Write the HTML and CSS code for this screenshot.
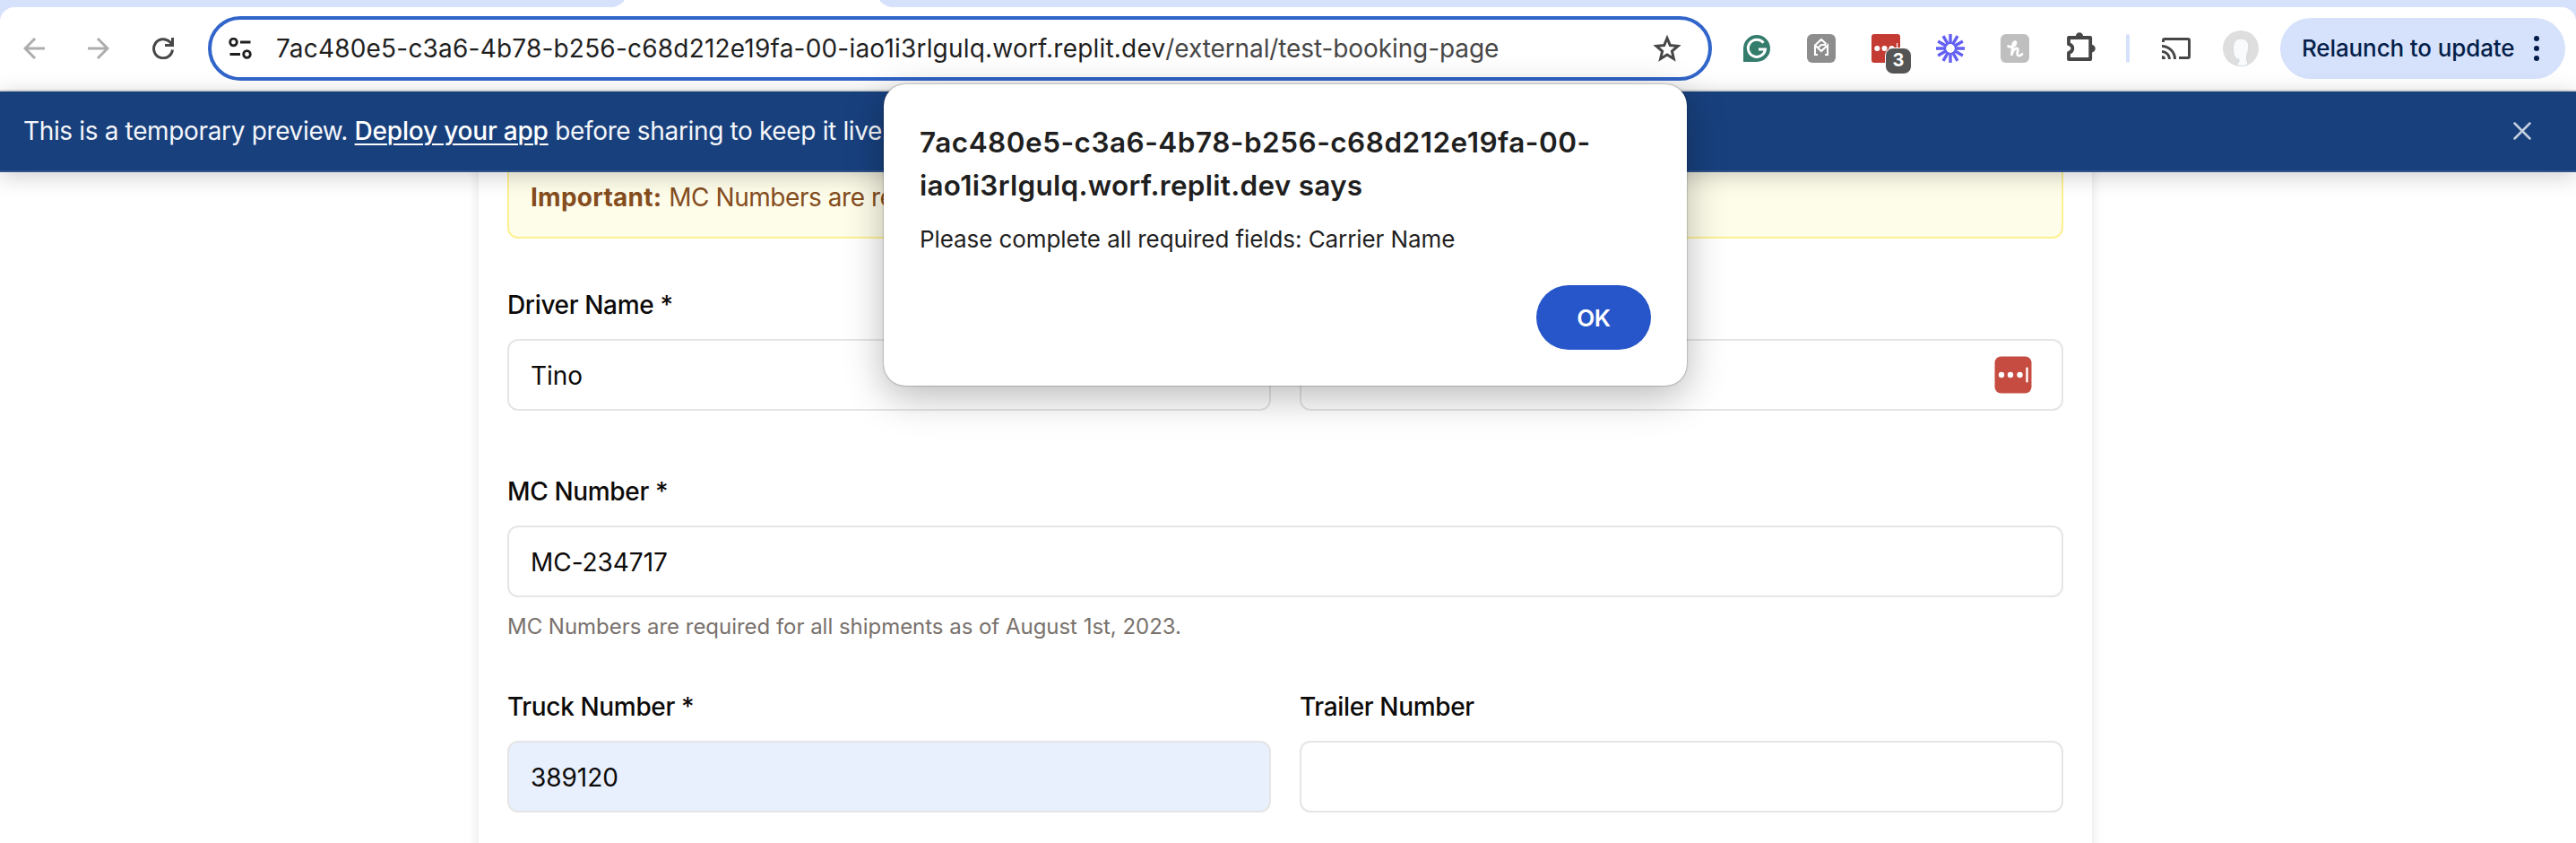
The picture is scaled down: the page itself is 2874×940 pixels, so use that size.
FILE: index.html
```html
<!DOCTYPE html>
<html lang="en">
<head>
<meta charset="utf-8">
<title>Booking</title>
<link rel="stylesheet" href="styles.css">
</head>
<body>
<div class="tabs"><div class="tabs-left"></div><div class="tabs-right"></div></div>
<header class="toolbar-wrap">
  <div class="toolbar">
    <div class="nav">
      <svg class="dim" width="24" height="24" viewBox="0 0 24 24"><path d="M24 12H2M13 1L2 12l11 11"/></svg>
      <svg class="dim" width="24" height="24" viewBox="0 0 24 24"><path d="M0 12H22M11 1l11 11-11 11"/></svg>
      <svg class="dark" width="24" height="24" viewBox="0 0 24 24"><path d="M22.500 13.500A10.500 10.500 0 1 1 19.500 4.800L22 7.500M22.500 0v8.500h-8.500"/></svg>
    </div>
    <div class="omnibox">
      <svg class="tune" width="26" height="24" viewBox="0 0 26 24"><circle cx="5.500" cy="5" r="3.800"/><circle cx="20.500" cy="18.500" r="3.800"/><path d="M13 5h11.500M1.500 18.500h11.500"/></svg>
      <span class="url">7ac480e5-c3a6-4b78-b256-c68d212e19fa-00-iao1i3rlgulq.worf.replit.dev<span class="path">/external/test-booking-page</span></span>
      <svg class="star" width="32" height="30" viewBox="0 0 32 30"><path d="M16 3.500l3.300 8 8.700.8-6.600 5.700 2 8.500-7.400-4.500-7.400 4.500 2-8.500L4 12.300l8.700-.8z"/></svg>
    </div>
    <div class="exts">
      <svg width="32" height="32" viewBox="0 0 32 32"><path d="M1 31V16a15 15 0 1 1 15 15z" fill="#347c6c"/><path d="M23.500 9.800A9.600 9.600 0 1 0 25.500 17H18" fill="none" stroke="#fff" stroke-width="3"/></svg>
      <svg width="32" height="32" viewBox="0 0 32 32"><rect width="32" height="32" rx="6" fill="#8d8d8d"/><path d="M12 23H9V12.500L16 6l5.500 5M9 12.500l7 6.500 7-6.500V23h-3M21 12h-5l-3.500 3" fill="none" stroke="#fff" stroke-width="2.100"/></svg>
      <div class="pass">
        <svg width="32" height="32" viewBox="0 0 32 32"><rect width="32" height="32" rx="3" fill="#c33b32"/><g fill="#fff"><circle cx="6.300" cy="16" r="3"/><circle cx="14.500" cy="16" r="3"/><circle cx="22.500" cy="16" r="3"/><rect x="28" y="10" width="1.200" height="12"/></g></svg>
        <span class="count">3</span>
      </div>
      <svg width="32" height="32" viewBox="-16 -16 32 32"><g stroke="#6460f2" stroke-width="3.400"><path id="r" d="M0-16V-5M0 16V5M-16 0H-5M16 0H5"/><use href="#r" transform="rotate(30)"/><use href="#r" transform="rotate(60)"/><circle r="6" fill="none" stroke-width="2.200"/></g></svg>
      <svg width="32" height="32" viewBox="0 0 32 32"><rect width="32" height="32" rx="6" fill="#bfbfbf"/><path d="M8.500 13.500c3 1.500 8 .5 8.500-3.500.2-2.500-2.500-2-3.200 1L12.200 24c1-5 3.500-8.500 6-8.200 2.500.5 0 4.500.5 7 .5 2.200 3.500 1.500 5.300-.5" fill="none" stroke="#fff" stroke-width="2.700" stroke-linecap="round"/></svg>
      <svg class="puzzle" width="34" height="34" viewBox="0 0 34 34"><path fill="none" stroke="#464646" stroke-width="3.800" stroke-linejoin="round" d="M3 6h24.200v24H3v-7.200c5.800-1.500 5.800-8.100 0-9.600z"/><path fill="#464746" d="M10.800 5a4.200 4.800 0 0 1 8.400 0zM28 13.800a4.800 4.300 0 0 1 0 8.600z"/></svg>
    </div>
    <i class="sep"></i>
    <svg class="cast" width="32" height="24" viewBox="0 0 32 24"><path fill="none" stroke="#474747" stroke-width="3" d="M1.500 5V3q0-1.500 1.500-1.500h26q1.500 0 1.500 1.500v18q0 1.500-1.500 1.500H19M0 9.500A14.500 14.500 0 0 1 14.500 24M0 15.500A8.500 8.500 0 0 1 8.500 24"/><path fill="#474747" d="M0 20a4 4 0 0 1 4 4H0z"/></svg>
    <svg class="avatar" width="40" height="40" viewBox="0 0 40 40"><circle cx="20" cy="20" r="20" fill="#dedede"/><path d="M20 9c5.500 0 8.700 3.500 8.700 9 0 6-2.700 8.500-2.200 14l1.500 6.500q-7 2.500-14-.2c3-1 4.500-2.800 4-6.300-4.500-.5-6.500-4-6.500-12S15 9 20 9z" fill="#f8fafb" stroke="#ccd3d8" stroke-width=".7"/></svg>
    <div class="relaunch"><span>Relaunch to update</span><svg width="6" height="28" viewBox="0 0 6 28"><circle cx="3" cy="3" r="3"/><circle cx="3" cy="14" r="3"/><circle cx="3" cy="25" r="3"/></svg></div>
  </div>
</header>
<div class="banner">
  <p>This is a temporary preview. <a>Deploy your app</a> before sharing to keep it live.</p>
  <svg width="20" height="20" viewBox="0 0 20 20"><path d="M1.500 1.500l17 17M18.500 1.500l-17 17"/></svg>
</div>
<main class="card">
  <div class="alert"><b>Important:</b> <span>MC Numbers are re</span></div>
  <div class="row">
    <div class="field"><label>Driver Name *</label><div class="input">Tino</div></div>
    <div class="field"><label>&nbsp;</label><div class="input end"><svg width="42" height="42" viewBox="0 0 42 42"><rect x=".5" y=".5" width="41" height="41" rx="7" fill="#c64b40"/><g fill="#fff"><circle cx="8" cy="21" r="3.200"/><circle cx="18" cy="21" r="3.200"/><circle cx="28.500" cy="21" r="3.200"/><rect x="35.300" y="12.500" width="2.400" height="17" rx="1"/></g></svg></div></div>
  </div>
  <div class="field mc"><label>MC Number *</label><div class="input">MC-234717</div><p class="hint">MC Numbers are required for all shipments as of August 1st, 2023.</p></div>
  <div class="row">
    <div class="field"><label>Truck Number *</label><div class="input filled">389120</div></div>
    <div class="field"><label>Trailer Number</label><div class="input"></div></div>
  </div>
</main>
<div class="dialog">
  <h1><span class="host">7ac480e5-c3a6-4b78-b256-c68d212e19fa-00-</span><br>iao1i3rlgulq.worf.replit.dev says</h1>
  <p>Please complete all required fields: Carrier Name</p>
  <button>OK</button>
</div>
</body>
</html>
```
FILE: styles.css
```css
* { box-sizing: border-box; }
body { margin: 0; width: 2874px; height: 940px; overflow: hidden; background: #fff; font: 28px/28px Inter, "Liberation Sans", sans-serif; color: #0c0a09; position: relative; }
p, h1 { margin: 0; }
svg { flex: none; display: block; }
.tabs { height: 8px; display: flex; justify-content: space-between; overflow: hidden; }
.tabs div { background: #d6e1fb; height: 28px; margin-top: -20px; }
.tabs-left { width: 701px; border-bottom-right-radius: 20px; }
.tabs-right { width: 1897px; border-bottom-left-radius: 20px; }
.toolbar-wrap { background: #d6e1fb; height: 94px; }
.toolbar { height: 94px; background: #fff; border-radius: 16px 16px 0 0; border-bottom: 2px solid #dfe1e1; display: flex; align-items: center; padding-left: 26px; }
.nav { display: flex; width: 206px; gap: 48px; }
.nav svg { fill: none; stroke-width: 3; }
.dim { stroke: #adadad; }
.nav .dark { stroke: #474747; }
.omnibox { width: 1678px; height: 72px; border: 4px solid #3165ca; border-radius: 36px; display: flex; align-items: center; padding: 0 30px 0 19px; }
.tune { fill: none; stroke: #1f1f1f; stroke-width: 2.8; }
.url { margin-left: 27px; color: #1f1f1f; white-space: nowrap; flex: 1; letter-spacing: .2px; }
.path { color: #474747; letter-spacing: -.1px; }
.star { fill: none; stroke: #474747; stroke-width: 3; }
.exts { display: flex; margin-left: 34px; gap: 40px; }
.pass { position: relative; }
.count { position: absolute; left: 15px; top: 15px; width: 30px; height: 30px; border: 1px solid #fff; border-radius: 9px; background: #555; color: #fff; font-size: 20px; font-weight: 700; line-height: 27px; text-align: center; }
.puzzle { margin: -2px 0 0 1px; }
.sep { width: 4px; height: 32px; border-radius: 2px; background: #d6e1fb; margin-left: 33px; }
.cast { margin-left: 36px; }
.avatar { margin-left: 36px; }
.relaunch { margin-left: 24px; width: 318px; height: 68px; border-radius: 34px; background: #d6e1fb; display: flex; align-items: center; justify-content: space-between; padding: 0 29px 0 24px; color: #041e49; font-size: 26px; font-weight: 500; letter-spacing: -.12px; white-space: nowrap; }
.relaunch svg { fill: #041e49; }
.banner { position: relative; z-index: 1; height: 90px; background: #18407d; border-bottom: 2px solid #2e5189; box-shadow: 0 4px 24px rgba(0,0,0,.2); color: #f4f6fa; display: flex; align-items: center; justify-content: space-between; padding: 0 50px 0 26px; letter-spacing: -.35px; }
.banner a { font-weight: 500; color: #fff; letter-spacing: -.2px; text-decoration: underline; text-decoration-thickness: 2px; text-underline-offset: 4px; }
.banner svg { stroke: #c5cfdf; stroke-width: 2.5; stroke-linecap: round; }
.card { width: 1800px; height: 800px; margin-left: 534px; margin-top: -20px; padding: 0 32px; box-shadow: 0 0 12px rgba(0,0,0,.12); }
.alert { height: 94px; border: 2px solid #fdf08f; border-radius: 12px; background: #fefdea; color: #854d1e; line-height: 40px; padding: 26px 24px; white-space: nowrap; }
.alert b { letter-spacing: .25px; }
.alert span { letter-spacing: -.45px; }
.row { display: grid; grid-template-columns: 1fr 1fr; gap: 32px; margin-top: 60px; }
.field label { display: block; height: 28px; font-weight: 500; letter-spacing: -.35px; }
.input { height: 80px; margin-top: 24px; border: 2px solid #e5e5e5; border-radius: 12px; padding: 2px 24px 0; display: flex; align-items: center; letter-spacing: -.05px; }
.end { justify-content: flex-end; padding: 0 33px; }
.filled { background: #e8f0fe; }
.mc { margin-top: 76px; }
.hint { margin: 15px 0 -1px; font-size: 24px; line-height: 36px; letter-spacing: -.03px; color: #78716c; white-space: nowrap; }
.mc + .row { margin-top: 58px; }
.dialog { position: absolute; z-index: 2; left: 986px; top: 94px; width: 896px; height: 336px; border-radius: 24px; background: #fff; box-shadow: 0 0 2px rgba(0,0,0,.55), 0 12px 44px rgba(0,0,0,.28); padding: 41px 40px; color: #1f1f1f; display: flex; flex-direction: column; white-space: nowrap; }
.dialog h1 { font-size: 31.5px; line-height: 48px; font-weight: 600; letter-spacing: .27px; }
.host { letter-spacing: .49px; }
.dialog p { font-size: 26px; line-height: 36px; margin-top: 18px; letter-spacing: -.08px; }
.dialog button { align-self: flex-end; margin-top: 33px; width: 128px; height: 72px; flex: none; border: 0; border-radius: 36px; background: #2756ca; color: #fff; font: 600 26px Inter, sans-serif; letter-spacing: -.3px; }
```
